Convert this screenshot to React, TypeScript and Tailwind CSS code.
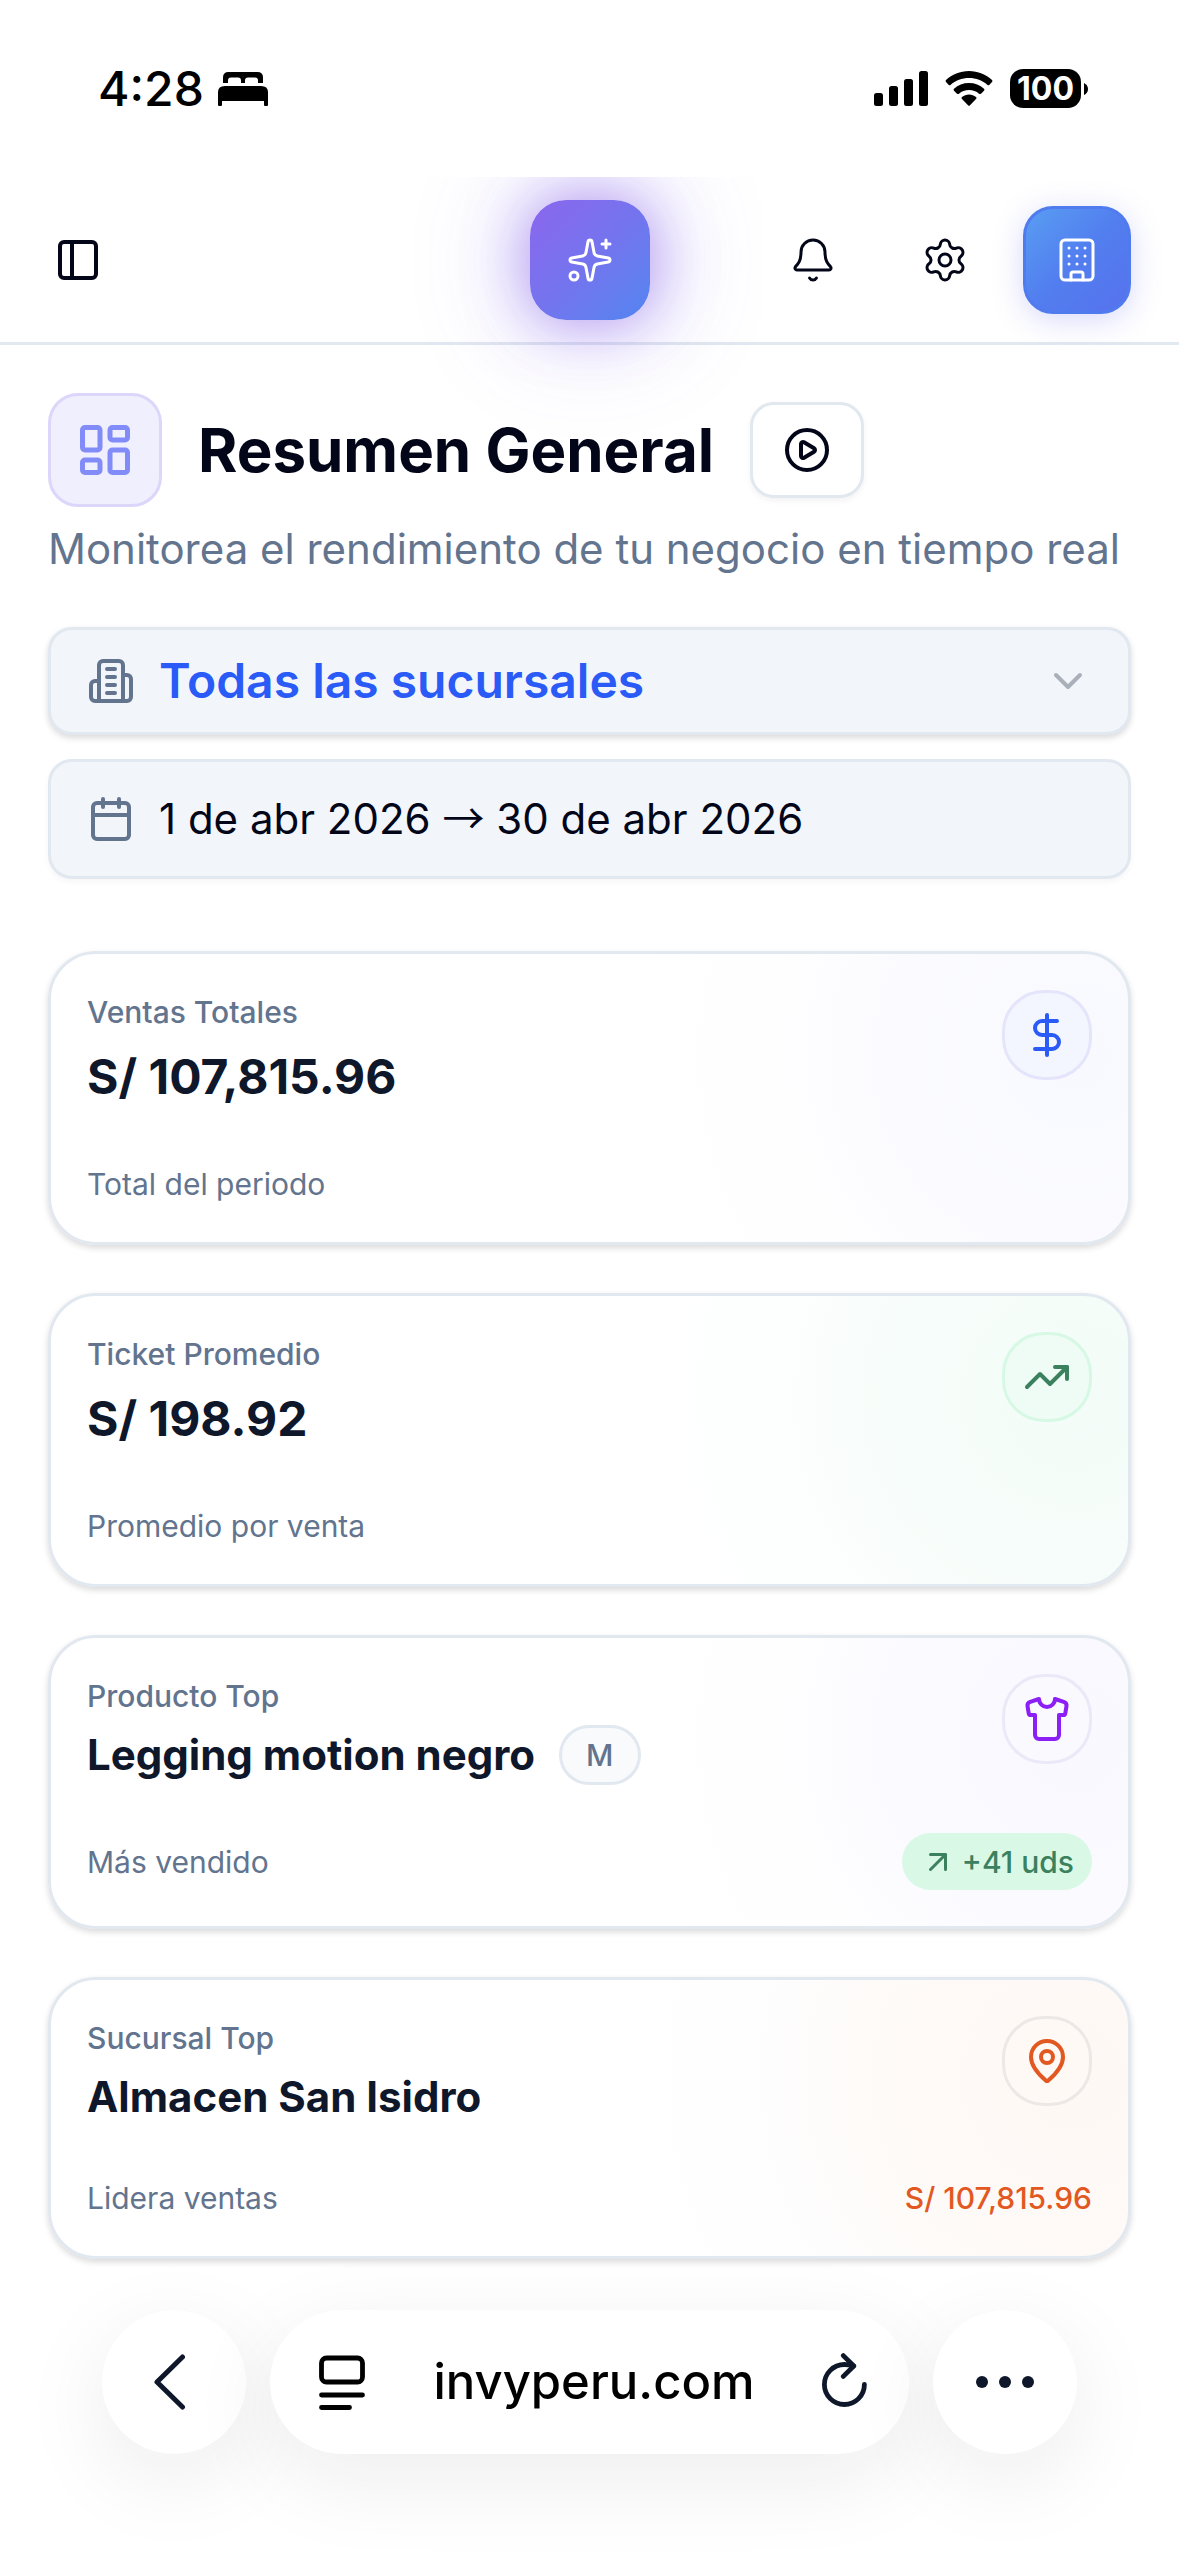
import React from "react";
import {
  ArrowUpRight,
  Bell,
  Building,
  Calendar,
  ChevronDown,
  CirclePlay,
  DollarSign,
  LayoutDashboard,
  MapPin,
  PanelLeft,
  Settings,
  Shirt,
  Sparkles,
  TrendingUp,
} from "lucide-react";

const StatusBar = () => {
  return (
    <div className="flex items-center justify-between h-[177px] pl-[98px] pr-[91px] text-black">
      <div className="flex items-center gap-[14px]">
        <span className="text-[48px] leading-[60px] font-medium">4:28</span>
        <svg viewBox="0 0 50 34" width="50" height="34" fill="currentColor">
          <path d="M5 11V5.500Q5 0 10.500 0H39.500Q45 0 45 5.500V11H40V8.500Q40 5.500 37 5.500H30Q27 5.500 27 8.500V11H23V8.500Q23 5.500 20 5.500H13Q10 5.500 10 8.500V11Z" />
          <path d="M0 20Q0 14 7 14H43Q50 14 50 20V33Q50 34 49 34H47Q46 34 46 33V29H4V33Q4 34 3 34H1Q0 34 0 33Z" />
        </svg>
      </div>
      <div className="flex items-center gap-[17px]">
        <svg viewBox="0 0 54 35" width="54" height="35" fill="currentColor">
          <rect x="0" y="22" width="9" height="13" rx="2.500" />
          <rect x="15" y="15" width="9" height="20" rx="2.500" />
          <rect x="30" y="8" width="9" height="27" rx="2.500" />
          <rect x="45" y="0" width="9" height="35" rx="2.500" />
        </svg>
        <svg viewBox="0 0 48 35" width="48" height="35" fill="currentColor">
          <path d="M24 0C33 0 41 3.500 47 9Q48 10 47 11L44.500 13.800Q43.500 14.800 42.500 13.900C37.500 9.400 31 7 24 7S10.500 9.400 5.500 13.900Q4.500 14.800 3.500 13.800L1 11Q0 10 1 9C7 3.500 15 0 24 0Z" />
          <path d="M24 12C29.800 12 35 14 39 17.700Q40 18.700 39 19.700L36 22.700Q35 23.500 34 22.700C31.300 20.300 27.800 19 24 19S16.700 20.300 14 22.700Q13 23.500 12 22.700L9 19.700Q8 18.700 9 17.700C13 14 18.200 12 24 12Z" />
          <path d="M24 23.500C26.700 23.500 29 24.400 31 26Q32 27 31 28L25 34.300Q24 35.300 23 34.300L17 28Q16 27 17 26C19 24.400 21.300 23.500 24 23.500Z" />
        </svg>
        <div className="flex items-center gap-[3px]">
          <span className="flex items-center justify-center w-[71px] h-[39px] rounded-[13px] bg-black text-white text-[32px] leading-[39px] font-bold">
            100
          </span>
          <svg viewBox="0 0 4 12" width="4" height="12" fill="currentColor">
            <path d="M0 0Q4 2 4 6T0 12Z" />
          </svg>
        </div>
      </div>
    </div>
  );
};

const Header = () => {
  return (
    <header className="relative grid grid-cols-3 items-center h-[168px] px-12 border-b-[3px] border-slate-200 [clip-path:inset(0_0_-160px_0)]">
      <button aria-label="Abrir menú" className="justify-self-start p-[6px]">
        <PanelLeft size={48} />
      </button>
      <button
        aria-label="Asistente"
        className="justify-self-center flex items-center justify-center size-[120px] rounded-[36px] bg-linear-to-br from-[#8b66ee] via-[#7474ee] to-[#5085f0] text-white shadow-[0_0_60px_rgba(124,72,225,0.55),0_0_120px_rgba(110,92,246,0.32)]"
      >
        <Sparkles size={48} strokeWidth={1.5} />
      </button>
      <div className="justify-self-end flex items-center gap-6">
        <button
          aria-label="Notificaciones"
          className="flex items-center justify-center size-[108px]"
        >
          <Bell size={48} strokeWidth={1.5} />
        </button>
        <button
          aria-label="Configuración"
          className="flex items-center justify-center size-[108px]"
        >
          <Settings size={48} strokeWidth={1.5} />
        </button>
        <button
          aria-label="Empresa"
          className="flex items-center justify-center size-[108px] rounded-[30px] border-[3px] border-[#507bee] bg-linear-to-br from-[#599df2] via-[#527eef] to-[#5672ee] text-white shadow-[0_6px_30px_rgba(99,102,241,0.25)]"
        >
          <Building size={48} strokeWidth={1.5} />
        </button>
      </div>
    </header>
  );
};

// Building with four rows of windows
const BranchIcon = () => (
  <svg
    viewBox="0 0 24 24"
    width="48"
    height="48"
    fill="none"
    stroke="currentColor"
    strokeWidth="2"
    strokeLinecap="round"
    strokeLinejoin="round"
  >
    <path d="M6 22V4a2 2 0 0 1 2-2h8a2 2 0 0 1 2 2v18Z" />
    <path d="M6 12H4a2 2 0 0 0-2 2v6a2 2 0 0 0 2 2h2" />
    <path d="M18 9h2a2 2 0 0 1 2 2v9a2 2 0 0 1-2 2h-2" />
    <path d="M10 6h4M10 10h4M10 14h4M10 18h4" />
  </svg>
);

const Filters = () => {
  return (
    <div className="flex flex-col gap-6 mt-12">
      <button className="flex items-center gap-6 h-[108px] px-9 rounded-[24px] border-[3px] border-slate-200 bg-[#f2f5fa] shadow-[0_3px_6px_rgba(0,0,0,0.15)] text-slate-500">
        <BranchIcon />
        <span className="flex-1 text-left text-[48px] leading-[60px] font-semibold text-[#2b5bf6]">
          Todas las sucursales
        </span>
        <ChevronDown size={48} className="text-[#a9b0ba]" />
      </button>
      <button className="flex items-center gap-6 h-[120px] px-9 rounded-[24px] border-[3px] border-slate-200 bg-[#f2f5fa] shadow-[0_3px_6px_rgba(0,0,0,0.04)] text-slate-500">
        <Calendar size={48} />
        <span className="text-[42px] leading-[60px] text-slate-950">
          1 de abr 2026{" "}
          <span className="font-['Noto_Sans_CJK_JP',sans-serif] leading-none">
            →
          </span>{" "}
          30 de abr 2026
        </span>
      </button>
    </div>
  );
};

interface StatCardProps {
  label: string;
  value: string;
  caption: string;
  icon: React.ReactNode;
  iconClass: string;
  glowClass: string;
  small?: boolean;
  tag?: string;
  extra?: React.ReactNode;
}

const StatCard: React.FC<StatCardProps> = ({
  label,
  value,
  caption,
  icon,
  iconClass,
  glowClass,
  small,
  tag,
  extra,
}) => {
  return (
    <article
      className={`flex flex-col p-9 rounded-[48px] border-[3px] border-slate-200 shadow-[0_3px_6px_rgba(0,0,0,0.15)] ${glowClass}`}
    >
      <div className="flex items-start justify-between">
        <div>
          <p className="mt-[2px] text-[30px] leading-[40px] font-medium text-slate-500">
            {label}
          </p>
          <div className="flex items-center gap-6 mt-[9px]">
            {small ? (
              <h2 className="text-[42px] leading-[60px] font-bold text-slate-900">
                {value}
              </h2>
            ) : (
              <h2 className="text-[48px] leading-[72px] font-bold text-slate-900">
                {value}
              </h2>
            )}
            {tag && (
              <span className="flex items-center h-[60px] px-6 rounded-[30px] border-[3px] border-slate-200 bg-slate-50 text-[30px] leading-[40px] font-medium text-slate-500">
                {tag}
              </span>
            )}
          </div>
        </div>
        <span
          className={`flex items-center justify-center size-[90px] rounded-[42px] border-[3px] ${iconClass}`}
        >
          {icon}
        </span>
      </div>
      <div className="flex items-center justify-between mt-12 min-h-[45px]">
        <p className="text-[30px] leading-[40px] text-slate-500">{caption}</p>
        {extra}
      </div>
    </article>
  );
};

const BrowserBar = () => {
  return (
    <nav className="flex items-center gap-6 px-[102px] pt-[51px] pb-[102px] text-slate-900">
      <button
        aria-label="Atrás"
        className="flex items-center justify-center size-[144px] rounded-full bg-white shadow-[0_24px_90px_rgba(0,20,10,0.08)]"
      >
        <svg
          viewBox="0 0 42 56"
          width="42"
          height="56"
          fill="none"
          stroke="currentColor"
          strokeWidth="5"
          strokeLinecap="round"
          strokeLinejoin="round"
        >
          <path d="M29.500 3L4 28L29.500 53" />
        </svg>
      </button>
      <div className="flex-1 flex items-center justify-between h-[144px] pl-12 pr-[42px] rounded-full bg-white shadow-[0_24px_90px_rgba(0,20,10,0.08)]">
        <button aria-label="Página">
          <svg
            viewBox="0 0 48 56"
            width="48"
            height="56"
            fill="none"
            stroke="black"
            strokeWidth="4.800"
            strokeLinecap="round"
          >
            <rect x="3.500" y="4" width="41" height="24" rx="5" />
            <path d="M3.500 41H44.500M3.500 53.500H31.500" />
          </svg>
        </button>
        <span className="text-[49px] leading-[60px] font-medium text-black">
          invyperu.com
        </span>
        <button aria-label="Recargar">
          <svg
            viewBox="0 0 45 58"
            width="45"
            height="58"
            fill="none"
            stroke="currentColor"
            strokeWidth="4.800"
            strokeLinecap="round"
            strokeLinejoin="round"
          >
            <path d="M42.400 31.500A20 20 0 1 1 22.400 11.500Q27 11.500 31.500 13" />
            <path d="M21.300 2.600L31.800 13L21.300 23.400" />
          </svg>
        </button>
      </div>
      <button
        aria-label="Más"
        className="flex items-center justify-center size-[144px] rounded-full bg-white shadow-[0_24px_90px_rgba(0,20,10,0.08)]"
      >
        <svg viewBox="0 0 58 12" width="58" height="12" fill="currentColor">
          <circle cx="6" cy="6" r="6" />
          <circle cx="29" cy="6" r="6" />
          <circle cx="52" cy="6" r="6" />
        </svg>
      </button>
    </nav>
  );
};

export default function App() {
  return (
    <div className="min-h-screen bg-white text-slate-950 font-['Inter',sans-serif] overflow-hidden">
      <StatusBar />
      <Header />
      <main className="px-12 pt-12">
        <div className="flex items-center gap-9">
          <span className="flex items-center justify-center size-[114px] rounded-[30px] border-[3px] border-[#ddd6fb] bg-[#f0effe] text-[#818cf8]">
            <LayoutDashboard size={60} />
          </span>
          <h1 className="text-[60px] leading-[72px] font-bold">
            Resumen General
          </h1>
          <button
            aria-label="Ver tutorial"
            className="flex items-center justify-center w-[114px] h-24 rounded-[24px] border-[3px] border-slate-200 bg-white shadow-[0_3px_6px_rgba(0,0,0,0.05)]"
          >
            <CirclePlay size={48} />
          </button>
        </div>
        <p className="mt-3 text-[42px] leading-[60px] text-slate-500">
          Monitorea el rendimiento de tu negocio en tiempo real
        </p>
        <Filters />
        <section className="flex flex-col gap-12 mt-[72px]">
          <StatCard
            label="Ventas Totales"
            value="S/ 107,815.96"
            caption="Total del periodo"
            icon={<DollarSign size={48} />}
            iconClass="border-[#e4e4fa] bg-[#f3f6fe] text-[#2b5bf6]"
            glowClass="bg-[radial-gradient(circle_at_95%_35%,#f8f9fe,#fbfbff_18%,#fefeff_28%,#ffffff_42%)]"
          />
          <StatCard
            label="Ticket Promedio"
            value="S/ 198.92"
            caption="Promedio por venta"
            icon={<TrendingUp size={48} />}
            iconClass="border-[#d6f8e4] bg-[#effcf5] text-[#3b815e]"
            glowClass="bg-[radial-gradient(circle_at_95%_35%,#f3fcf8,#f7fdfa_18%,#fdfefe_28%,#ffffff_42%)]"
          />
          <StatCard
            label="Producto Top"
            value="Legging motion negro"
            caption="Más vendido"
            small
            tag="M"
            icon={<Shirt size={48} />}
            iconClass="border-[#ebe8f8] bg-[#faf9fe] text-[#8b1ff5]"
            glowClass="bg-[radial-gradient(circle_at_95%_35%,#f9f8fe,#fbfaff_18%,#fefeff_28%,#ffffff_42%)]"
            extra={
              <span className="flex items-center gap-[6px] h-[57px] px-[18px] rounded-full bg-[#d9f9e6] text-[30px] leading-[40px] font-medium text-[#3b815e]">
                <ArrowUpRight size={36} />
                +41 uds
              </span>
            }
          />
          <StatCard
            label="Sucursal Top"
            value="Almacen San Isidro"
            caption="Lidera ventas"
            small
            icon={<MapPin size={48} />}
            iconClass="border-[#ece8e6] bg-[#fef9f5] text-[#e25822]"
            glowClass="bg-[radial-gradient(circle_at_95%_35%,#fef8f4,#fefaf7_18%,#fefdfd_28%,#ffffff_42%)]"
            extra={
              <span className="text-[30px] leading-[40px] font-medium text-[#e25822]">
                S/ 107,815.96
              </span>
            }
          />
        </section>
      </main>
      <BrowserBar />
    </div>
  );
}
